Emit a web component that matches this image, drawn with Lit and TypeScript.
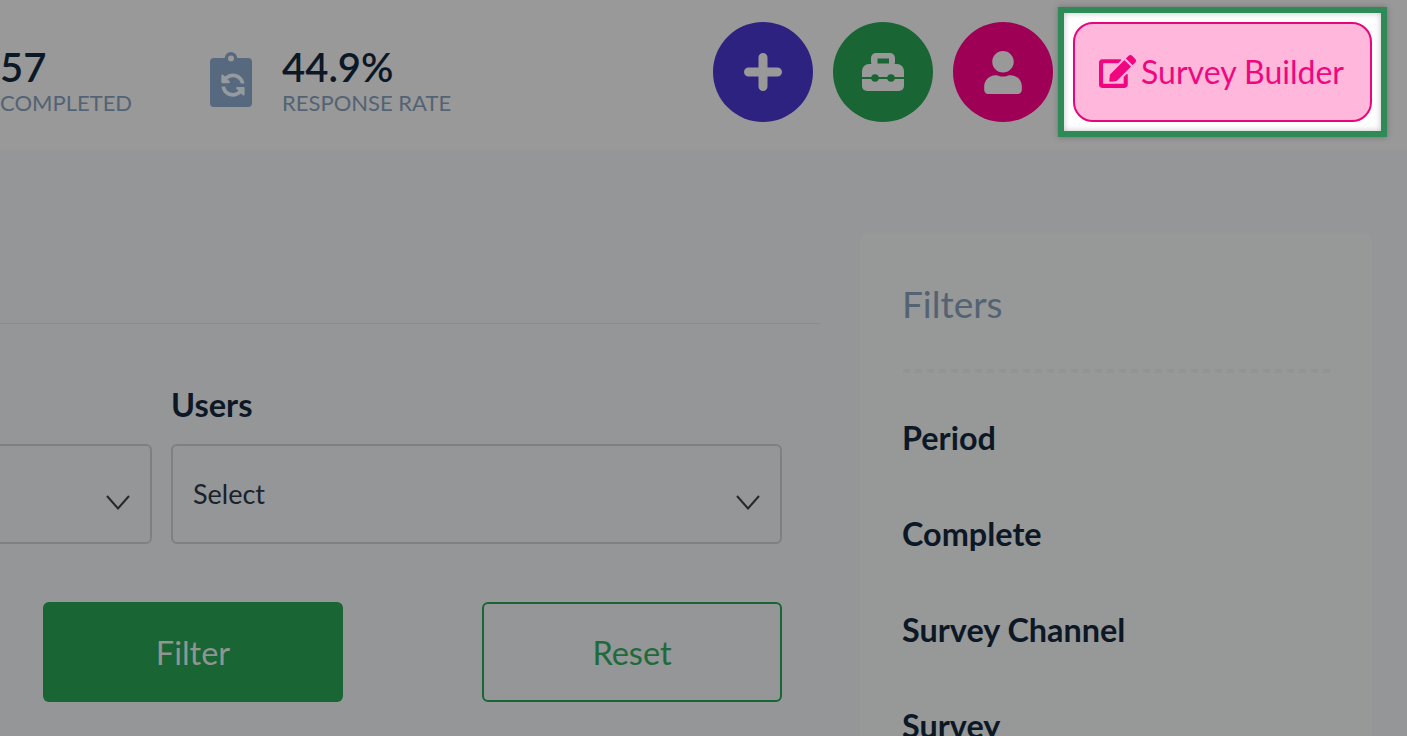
import { LitElement, css, html } from "lit";
import { customElement } from "lit/decorators.js";

const chevron = html`<svg class="chev" viewBox="0 0 24 15"><polyline points="1,1 12,13.5 23,1" fill="none" stroke="#25282c" stroke-width="2"/></svg>`;

@customElement("app-root")
export class AppRoot extends LitElement {
  static styles = css`
    :host {
      display: block;
      width: 1407px;
      height: 736px;
      overflow: hidden;
      background: #959697;
      font-family: Lato, "Open Sans", sans-serif;
      color: #0d1826;
    }
    .header {
      height: 150px;
      box-sizing: border-box;
      padding: 22px 20px 0 0;
      display: flex;
      background: #999999;
    }
    .stat {
      display: flex;
      gap: 30px;
      height: 100px;
    }
    .stat.first {
      width: 210px;
    }
    .clip {
      width: 42px;
      height: 55px;
      margin-top: 30px;
    }
    .num {
      font-size: 40px;
      line-height: 48px;
      font-weight: 600;
      margin-top: 21px;
    }
    .lbl {
      font-size: 22px;
      line-height: 26px;
      margin-top: -1px;
      color: #536373;
    }
    .actions {
      margin-left: auto;
      display: flex;
      gap: 20px;
    }
    .circle {
      width: 100px;
      height: 100px;
      border-radius: 50%;
      display: flex;
      align-items: center;
      justify-content: center;
    }
    .purple {
      background: #2e2280;
    }
    .green {
      background: #196533;
    }
    .magenta {
      background: #9d0055;
    }
    .highlight {
      box-sizing: border-box;
      width: 329px;
      height: 130px;
      margin: -15px 0 0 -15px;
      padding: 9px;
      border: 6px solid #2e8b57;
      background: #fff;
      box-shadow: 0 0 6px rgba(0, 0, 0, 0.25), inset 0 0 6px rgba(0, 0, 0, 0.25);
    }
    .builder {
      box-sizing: border-box;
      height: 100px;
      padding: 0 2px 2px 0;
      border: 2px solid #e9067c;
      border-radius: 20px;
      background: #ffb8dc;
      color: #f0077f;
      font-size: 32px;
      display: flex;
      align-items: center;
      justify-content: center;
      gap: 5px;
    }
    .builder svg {
      width: 37px;
      height: 33px;
      fill: #f0077f;
    }
    .main {
      display: flex;
      gap: 40px;
      align-items: flex-start;
    }
    .content {
      width: 820px;
      flex: none;
      padding-top: 173px;
    }
    .rule {
      height: 1px;
      background: #8b8c8d;
    }
    .fields {
      display: flex;
      gap: 19px;
      margin: 58px 0 0 -459px;
    }
    .field {
      width: 611px;
      flex: none;
    }
    .field label {
      display: block;
      height: 62px;
      font-size: 32.5px;
      line-height: 46px;
      font-weight: 700;
    }
    .select {
      box-sizing: border-box;
      height: 100px;
      border: 2px solid #808080;
      border-radius: 6px;
      padding: 0 20px 2px 20px;
      display: flex;
      align-items: center;
      justify-content: space-between;
      font-size: 27px;
      color: #1a222c;
    }
    .chev {
      width: 24px;
      height: 15px;
      margin-top: 19px;
    }
    .buttons {
      display: flex;
      justify-content: space-between;
      padding: 58px 38px 0 43px;
    }
    .btn {
      box-sizing: border-box;
      width: 300px;
      height: 100px;
      border-radius: 6px;
      display: flex;
      align-items: center;
      justify-content: center;
      font-size: 32.5px;
    }
    .btn.solid {
      background: #196533;
      color: #8f9691;
    }
    .btn.outline {
      border: 2px solid #196533;
      color: #1f6a3a;
    }
    .panel {
      box-sizing: border-box;
      width: 512px;
      height: 560px;
      margin-top: 84px;
      padding: 46px 42px 0 42px;
      background: #979898;
      border-radius: 6px;
      flex: none;
    }
    .panel h2 {
      margin: 0;
      font-size: 37px;
      line-height: 48px;
      font-weight: 400;
      color: #536373;
    }
    .dash {
      height: 4px;
      margin: 41px 0 0 1px;
      background: repeating-linear-gradient(90deg, #929393 0 7px, transparent 7px 12px);
    }
    .group {
      height: 96px;
      font-size: 32.4px;
      line-height: 40px;
      font-weight: 700;
    }
    .groups {
      padding-top: 45px;
    }
  `;

  render() {
    return html`
      <div class="header">
        <div class="stat first">
          <div>
            <div class="num">57</div>
            <div class="lbl">COMPLETED</div>
          </div>
        </div>
        <div class="stat">
          <svg class="clip" viewBox="0 0 42 55">
            <path fill="#56697f" fill-rule="evenodd" d="M21 0a6.500 6.500 0 0 1 6.300 6H38a4 4 0 0 1 4 4v41a4 4 0 0 1-4 4H4a4 4 0 0 1-4-4V10a4 4 0 0 1 4-4h10.700A6.500 6.500 0 0 1 21 0zm0 3.500a3 3 0 1 0 0 6 3 3 0 0 0 0-6z"/>
            <g transform="translate(35 21) scale(-0.047 0.047)">
              <path fill="#959a9e" d="M370.720 133.280C339.458 104.008 298.888 87.962 255.848 88c-77.458.068-144.328 53.178-162.791 126.850-1.344 5.363-6.122 9.150-11.651 9.150H24.103c-7.498 0-13.194-6.807-11.807-14.176C33.933 94.924 134.813 8 256 8c66.448 0 126.791 26.136 171.315 68.685L463.030 40.970C478.149 25.851 504 36.559 504 57.941V192c0 13.255-10.745 24-24 24H345.941c-21.382 0-32.090-25.851-16.971-40.971l41.750-41.749zM32 296h134.059c21.382 0 32.090 25.851 16.971 40.971l-41.750 41.750c31.262 29.273 71.835 45.319 114.876 45.280 77.418-.07 144.315-53.144 162.787-126.849 1.344-5.363 6.122-9.150 11.651-9.150h57.304c7.498 0 13.194 6.807 11.807 14.176C478.067 417.076 377.187 504 256 504c-66.448 0-126.791-26.136-171.315-68.685L48.970 471.030C33.851 486.149 8 475.441 8 454.059V320c0-13.255 10.745-24 24-24z"/>
            </g>
          </svg>
          <div>
            <div class="num">44.9%</div>
            <div class="lbl">RESPONSE RATE</div>
          </div>
        </div>
        <div class="actions">
          <div class="circle purple">
            <svg width="38" height="38" viewBox="0 0 38 38"><path d="M19 4.500v29M4.500 19h29" stroke="#999" stroke-width="9" stroke-linecap="round"/></svg>
          </div>
          <div class="circle green">
            <svg width="42" height="38" viewBox="0 0 42 38">
              <rect x="9" y="0" width="24" height="14" rx="5" fill="#999"/>
              <path fill="#999" d="M7 11H35a7 7 0 0 1 7 7V33a5 5 0 0 1-5 5H5a5 5 0 0 1-5-5V18a7 7 0 0 1 7-7z"/>
              <rect x="15.500" y="5.500" width="11.500" height="5" fill="#196533"/>
              <rect x="0" y="24" width="42" height="2" fill="#196533"/>
              <circle cx="13" cy="25" r="3.800" fill="#196533"/>
              <circle cx="29" cy="25" r="3.800" fill="#196533"/>
            </svg>
          </div>
          <div class="circle magenta">
            <svg width="38" height="43" viewBox="0 0 448 512"><path fill="#999" d="M224 256c70.700 0 128-57.300 128-128S294.700 0 224 0 96 57.300 96 128s57.300 128 128 128zm89.600 32h-16.700c-22.200 10.200-46.900 16-72.900 16s-50.600-5.800-72.900-16h-16.700C60.200 288 0 348.200 0 422.400V464c0 26.500 21.500 48 48 48h352c26.500 0 48-21.500 48-48v-41.600c0-74.200-60.200-134.400-134.400-134.400z"/></svg>
          </div>
          <div class="highlight">
            <div class="builder">
              <svg viewBox="0 0 576 512"><path d="M402.600 83.200l90.200 90.200c3.800 3.800 3.800 10 0 13.800L274.400 405.600l-92.800 10.300c-12.400 1.400-22.900-9.100-21.500-21.500l10.300-92.800L388.800 83.200c3.800-3.800 10-3.800 13.800 0zm162-22.900l-48.800-48.800c-15.200-15.200-39.900-15.200-55.200 0l-35.400 35.400c-3.800 3.800-3.800 10 0 13.800l90.200 90.200c3.800 3.800 10 3.800 13.800 0l35.400-35.400c15.200-15.300 15.200-40 0-55.200zM384 346.200V448H64V128h229.800c3.200 0 6.200-1.300 8.500-3.500l40-40c7.600-7.600 2.200-20.500-8.500-20.500H48C21.500 64 0 85.500 0 112v352c0 26.500 21.500 48 48 48h352c26.500 0 48-21.500 48-48V306.200c0-10.700-12.900-16-20.500-8.500l-40 40c-2.200 2.300-3.500 5.300-3.500 8.500z"/></svg>
              Survey Builder
            </div>
          </div>
        </div>
      </div>
      <div class="main">
        <div class="content">
          <div class="rule"></div>
          <div class="fields">
            <div class="field">
              <label>&nbsp;</label>
              <div class="select"><span></span>${chevron}</div>
            </div>
            <div class="field">
              <label>Users</label>
              <div class="select"><span>Select</span>${chevron}</div>
            </div>
          </div>
          <div class="buttons">
            <div class="btn solid">Filter</div>
            <div class="btn outline">Reset</div>
          </div>
        </div>
        <div class="panel">
          <h2>Filters</h2>
          <div class="dash"></div>
          <div class="groups">
            <div class="group">Period</div>
            <div class="group">Complete</div>
            <div class="group">Survey Channel</div>
            <div class="group">Survey</div>
          </div>
        </div>
      </div>
    `;
  }
}
